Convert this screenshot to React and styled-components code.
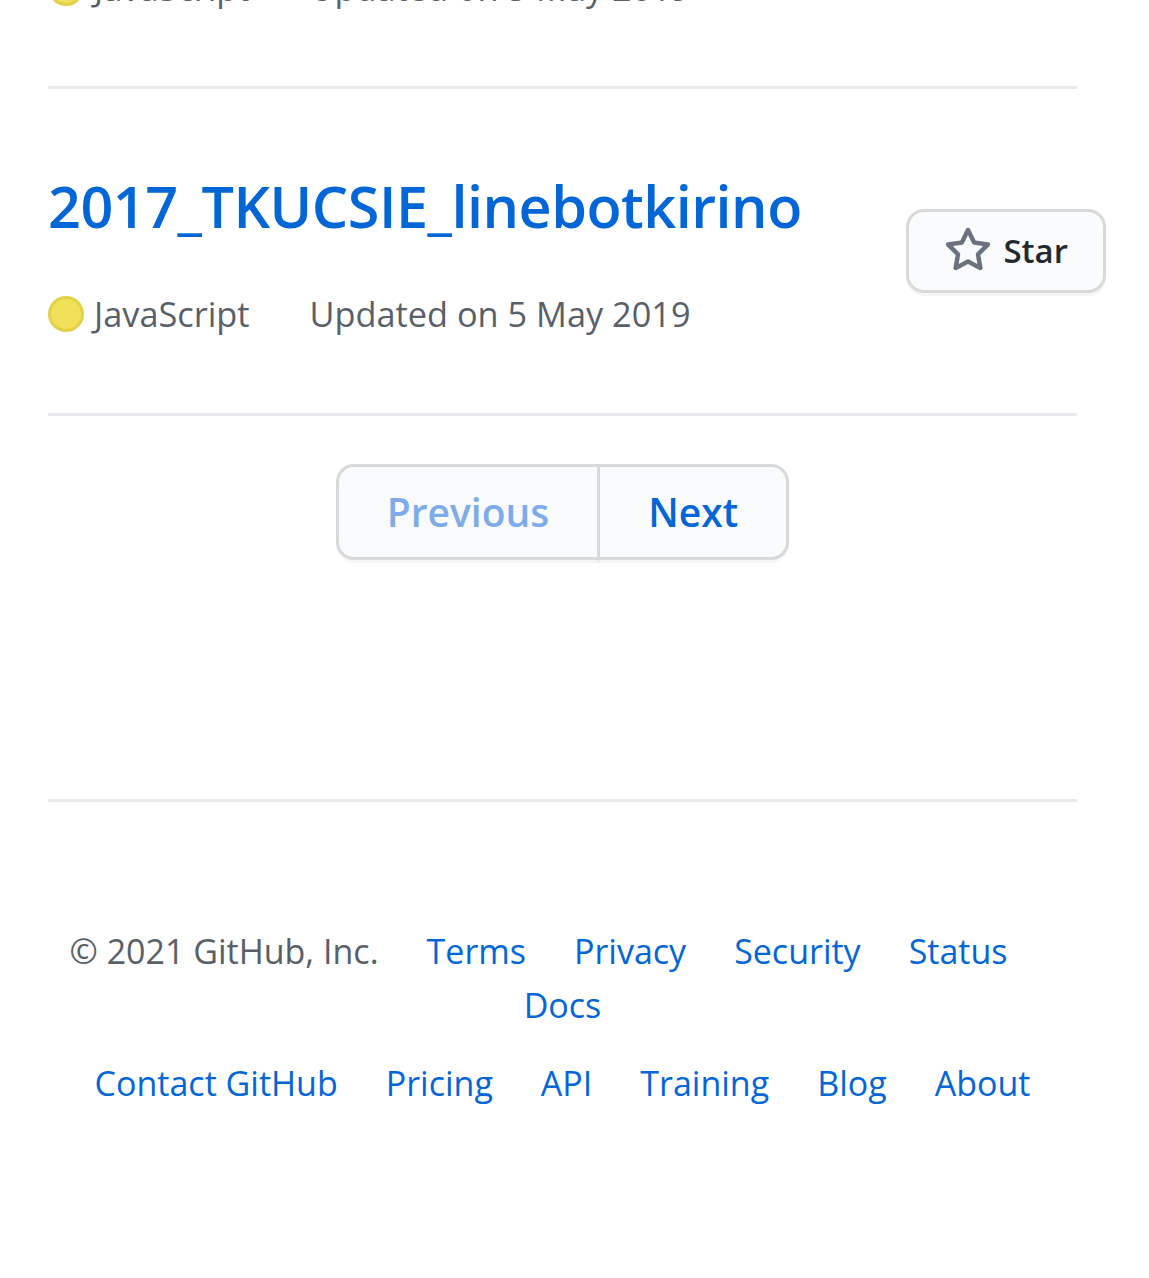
import styled, { createGlobalStyle } from "styled-components";

const GlobalStyle = createGlobalStyle`
  html, body {
    margin: 0;
    padding: 0;
    background: #ffffff;
    overflow: hidden;
  }
  body {
    font-family: "Open Sans", "Noto Sans", "Liberation Sans", sans-serif;
    color: #24292e;
  }
  a {
    text-decoration: none;
  }
`;

const repos = [
  { name: "tkucsie_previous", language: "JavaScript", updated: "5 May 2019", partial: true },
  { name: "2017_TKUCSIE_linebotkirino", language: "JavaScript", updated: "5 May 2019" },
];

const policyLinks = ["Terms", "Privacy", "Security", "Status", "Docs"];
const siteLinks = ["Contact GitHub", "Pricing", "API", "Training", "Blog", "About"];

const StarIcon = () => (
  <svg width="48" height="48" viewBox="0 0 16 16" fill="#6a737d" aria-hidden="true">
    <path
      fillRule="evenodd"
      d="M8 .25a.75.75 0 01.673.418l1.882 3.815 4.21.612a.75.75 0 01.416 1.279l-3.046 2.97.719 4.192a.75.75 0 01-1.088.791L8 12.347l-3.766 1.98a.75.75 0 01-1.088-.79l.72-4.194L.818 6.374a.75.75 0 01.416-1.28l4.21-.611L7.327.668A.75.75 0 018 .25zm0 2.445L6.615 5.5a.75.75 0 01-.564.41l-3.097.45 2.24 2.184a.75.75 0 01.216.664l-.528 3.084 2.769-1.456a.75.75 0 01.698 0l2.77 1.456-.53-3.084a.75.75 0 01.216-.664l2.24-2.183-3.096-.45a.75.75 0 01-.564-.41L8 2.694v.001z"
    />
  </svg>
);

const RepoMeta = ({ language, updated, $spaced }) => (
  <Meta $spaced={$spaced}>
    <LangDot />
    <LangName>{language}</LangName>
    <span>Updated on {updated}</span>
  </Meta>
);

const App = () => {
  return (
    <>
      <GlobalStyle />
      <Page>
        <RepoList>
          {repos.map((repo) =>
            repo.partial ? (
              <RepoItem key={repo.name} $partial>
                <MainCol>
                  <RepoMeta language={repo.language} updated={repo.updated} />
                </MainCol>
              </RepoItem>
            ) : (
              <RepoItem key={repo.name}>
                <MainCol>
                  <Title>
                    <a href="#">{repo.name}</a>
                  </Title>
                  <RepoMeta language={repo.language} updated={repo.updated} $spaced />
                </MainCol>
                <StarCol>
                  <StarButton>
                    <StarIcon />
                    Star
                  </StarButton>
                </StarCol>
              </RepoItem>
            )
          )}
        </RepoList>

        <Pagination>
          <PageButton $disabled $first>Previous</PageButton>
          <PageButton>Next</PageButton>
        </Pagination>

        <Footer>
          <FooterList>
            <FooterItem>© 2021 GitHub, Inc.</FooterItem>
            {policyLinks.map((l, i) => (
              <FooterItem key={l} $last={i === policyLinks.length - 1}>
                <FooterLink href="#">{l}</FooterLink>
              </FooterItem>
            ))}
          </FooterList>
          <FooterList>
            {siteLinks.map((l, i) => (
              <FooterItem key={l} $last={i === siteLinks.length - 1}>
                <FooterLink href="#">{l}</FooterLink>
              </FooterItem>
            ))}
          </FooterList>
        </Footer>
      </Page>
    </>
  );
};

export default App;

const Page = styled.div`
  width: 1029px;
  padding: 0 72px 0 48px;
`;

const RepoList = styled.ul`
  list-style: none;
  margin: -39px 0 0;
  padding: 0;
`;

const RepoItem = styled.li`
  display: flex;
  padding: ${(p) => (p.$partial ? "0 0 71px" : "72px 0")};
  border-bottom: 3px solid #e8eaed;
`;

const MainCol = styled.div`
  flex: 1;
  min-width: 0;
`;

const Title = styled.h3`
  margin: 0 0 12px;
  font-size: 57.5px;
  line-height: 90px;
  font-weight: 600;
  letter-spacing: -0.5px;
  a {
    color: #0366d6;
  }
`;

const Meta = styled.div`
  display: flex;
  align-items: center;
  font-size: 34.3px;
  line-height: 54px;
  color: #586069;
  margin-top: ${(p) => (p.$spaced ? "36px" : "0")};
`;

const LangDot = styled.span`
  width: 36px;
  height: 36px;
  border-radius: 50%;
  box-sizing: border-box;
  background: #f1e05a;
  border: 3px solid rgba(200, 180, 40, 0.35);
  margin-right: 10px;
`;

const LangName = styled.span`
  margin-right: 60px;
`;

const StarCol = styled.div`
  display: flex;
  align-items: center;
  margin-right: -29px;
`;

const StarButton = styled.button`
  display: flex;
  align-items: center;
  gap: 11px;
  padding: 9px 35px;
  height: 84px;
  box-sizing: border-box;
  font-family: inherit;
  font-size: 33px;
  font-weight: 600;
  line-height: 60px;
  color: #24292e;
  background: #fafbfc;
  border: 3px solid #d7d9db;
  border-radius: 18px;
  box-shadow: 0 3px 0 rgba(27, 31, 35, 0.04);
  cursor: pointer;
`;

const Pagination = styled.nav`
  display: flex;
  justify-content: center;
  margin: 48px 0;
`;

const PageButton = styled.a`
  display: block;
  padding: 15px 48px;
  font-size: 39px;
  font-weight: 600;
  line-height: 60px;
  color: ${(p) => (p.$disabled ? "#7eaceb" : "#0366d6")};
  background: #fafbfc;
  border: 3px solid #d7d9db;
  margin-left: ${(p) => (p.$first ? "0" : "-3px")};
  border-radius: ${(p) => (p.$first ? "18px 0 0 18px" : "0 18px 18px 0")};
  box-shadow: 0 3px 0 rgba(27, 31, 35, 0.04);
`;

const Footer = styled.footer`
  margin-top: 239px;
  padding-top: 122px;
  border-top: 3px solid #e8eaed;
`;

const FooterList = styled.ul`
  list-style: none;
  display: flex;
  flex-wrap: wrap;
  justify-content: center;
  margin: 0 0 24px;
  padding: 0;
  font-size: 34px;
  line-height: 54px;
  color: #586069;
`;

const FooterItem = styled.li`
  margin-right: ${(p) => (p.$last ? "0" : "48px")};
`;

const FooterLink = styled.a`
  color: #0366d6;
`;
